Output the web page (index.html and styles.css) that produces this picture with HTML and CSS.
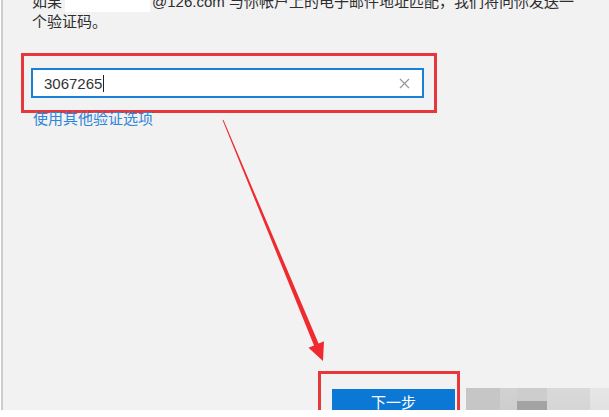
FILE: index.html
```html
<!DOCTYPE html>
<html lang="zh-CN">
<head>
<meta charset="utf-8">
<title>验证码</title>
<link rel="stylesheet" href="styles.css">
</head>
<body>
<div class="screen">
  <div class="panel">
    <p class="intro">如果<span class="redact"></span>@126.com 与你帐户上的电子邮件地址匹配，我们将向你发送一<br>个验证码。</p>
    <div class="mark mark-input">
      <div class="field">
        <span class="value">3067265</span><span class="caret"></span>
        <span class="clear"><svg width="11" height="11" viewBox="0 0 11 11"><path d="M1 1 L10 10 M10 1 L1 10" stroke="#9a9a9a" stroke-width="1.3" fill="none"/></svg></span>
      </div>
    </div>
    <a class="link" href="#">使用其他验证选项</a>
    <div class="footer">
      <div class="mark mark-btn"><button class="next" type="button">下一步</button></div>
      <div class="blur">
        <span class="b b1"></span><span class="b b2"></span><span class="b b3"></span><span class="b b4"></span><span class="b b5"></span>
      </div>
    </div>
  </div>
  <svg class="arrow" width="609" height="417" viewBox="0 0 609 417">
    <polygon points="222.6,120.2 223.4,119.8 318.6,343.5 324,341.3 323,361 308.5,347.7 314,345.4" fill="#ef2b30"/>
  </svg>
</div>
</body>
</html>
```
FILE: styles.css
```css
html, body {
  margin: 0;
  padding: 0;
  background: #ffffff;
}
.screen {
  position: relative;
  width: 609px;
  height: 417px;
  overflow: hidden;
  font-family: "Liberation Sans", "Noto Sans CJK SC", sans-serif;
}
.panel {
  margin-left: 1px;
  height: 410px;
  box-sizing: border-box;
  background: #f2f2f2;
  border-left: 2px solid #cdcdcd;
  padding-left: 18px;
  overflow: hidden;
}
.intro {
  margin: -8px 0 0 0;
  padding-left: 11px;
  font-size: 15px;
  line-height: 20px;
  color: #2e2e2e;
  white-space: nowrap;
}
.redact {
  display: inline-block;
  width: 85px;
  height: 20px;
  margin: 0 2px 0 3px;
  background: #ffffff;
  vertical-align: top;
}
.mark {
  border: 3px solid #e6373c;
  box-sizing: border-box;
}
.mark-input {
  margin-top: 21px;
  width: 416px;
  padding: 12px 10px 12px 7px;
}
.field {
  height: 30px;
  box-sizing: border-box;
  border: 2px solid #1a7fd6;
  background: #ffffff;
  display: flex;
  align-items: center;
  padding: 0 12px 0 11px;
}
.value {
  font-size: 15px;
  color: #333333;
}
.caret {
  width: 1px;
  height: 17px;
  background: #222;
  margin-left: 1px;
}
.clear {
  margin-left: auto;
  display: flex;
}
.link {
  display: block;
  width: max-content;
  margin-top: -4px;
  padding-left: 12px;
  font-size: 15px;
  line-height: 20px;
  color: #2f86d6;
  text-decoration: none;
}
.footer {
  margin-top: 242px;
  display: flex;
  justify-content: flex-end;
  gap: 6px;
}
.mark-btn {
  width: 142px;
  height: 60px;
  padding: 15px 2px 0 11px;
}
.next {
  display: block;
  width: 123px;
  height: 32px;
  border: none;
  margin: 0;
  padding: 0 0 6px 0;
  background: #0a78d4;
  color: #ffffff;
  font-family: "Noto Sans CJK SC", sans-serif;
  font-size: 15px;
  line-height: 26px;
}
.blur {
  width: 143px;
  height: 40px;
  margin-top: 17px;
  display: flex;
}
.b {
  display: block;
  height: 100%;
}
.b1 { width: 34px; background: #c6c6c6; }
.b2 { width: 17px; background: linear-gradient(#d2d2d2, #c9c9c9); }
.b3 { width: 30px; background: linear-gradient(#cdcdcd 0, #cdcdcd 13px, #a3a3a3 13px); }
.b4 { width: 43px; background: linear-gradient(#d9d9d9, #d3d3d3); }
.b5 { width: 19px; background: linear-gradient(#e6e6e6, #dedede); }
.arrow {
  position: absolute;
  left: 0;
  top: 0;
  pointer-events: none;
}
```
